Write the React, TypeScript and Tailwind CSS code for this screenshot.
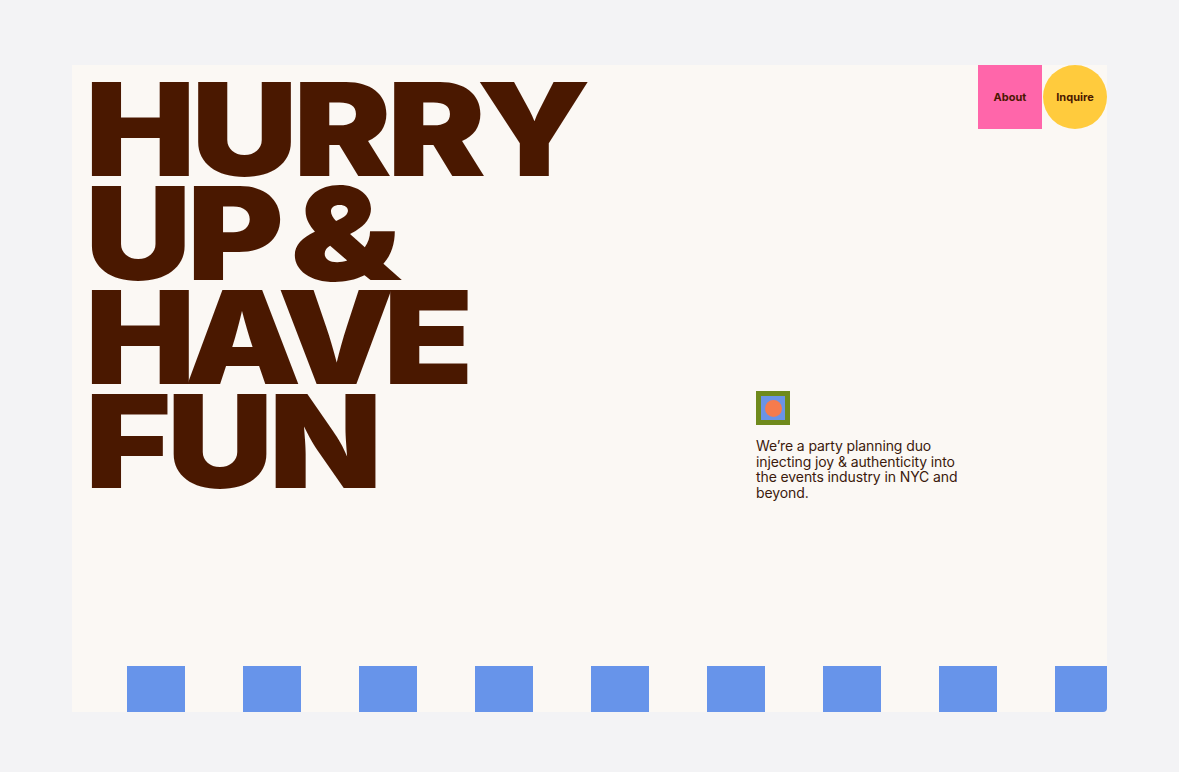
import React from "react";

const squares = Array.from({ length: 9 });

const Logo: React.FC = () => (
  <div className="w-[34px] h-[34px] bg-[#6f8a1c] p-[5px]">
    <div className="w-full h-full bg-[#6a93e6] flex items-center justify-center">
      <div className="w-[17px] h-[17px] rounded-full bg-[#f57b4d]" />
    </div>
  </div>
);

export default function App() {
  return (
    <div className="min-h-screen w-full bg-[#f3f3f5] pt-[65px] pl-[72px]">
      <div className="relative w-[1035px] h-[647px] bg-[#fbf8f4] rounded-br-[4px] overflow-hidden flex flex-col">
        <div className="flex flex-1">
          <div className="w-[684px] shrink-0 pl-[13px] pt-[12px]">
            <h1
              className="origin-left scale-x-[1.145] text-[129px] leading-[104px] font-black tracking-[-4px] text-[#4a1800]"
              style={{ fontFamily: "Inter, 'Liberation Sans', sans-serif" }}
            >
              HURRY
              <br />
              UP<span className="ml-[9px] inline-block origin-left scale-x-[1.08]">&amp;</span>
              <br />
              <span className="tracking-[-10px]">HAVE</span>
              <br />
              FUN
            </h1>
          </div>

          <div className="mt-[326px] w-[212px] flex flex-col">
            <Logo />
            <p
              className="mt-[13px] text-[14px] leading-[15.5px] text-[#3b1a0c] tracking-[-0.1px]"
              style={{ fontFamily: "Inter, 'Liberation Sans', sans-serif" }}
            >
              We’re a party planning duo injecting joy &amp; authenticity into the events industry in NYC and beyond.
            </p>
          </div>

          <nav
            className="ml-auto flex items-start"
            style={{ fontFamily: "Inter, 'Liberation Sans', sans-serif" }}
          >
            <a className="w-[64px] h-[64px] bg-[#ff66aa] flex items-center justify-center text-[11px] font-bold text-[#4a1800]">
              About
            </a>
            <a className="w-[64px] h-[64px] ml-px rounded-full bg-[#ffcb3d] flex items-center justify-center text-[11px] font-bold text-[#4a1800]">
              Inquire
            </a>
          </nav>
        </div>

        <div className="flex gap-[58px] pl-[55px] h-[46px] shrink-0">
          {squares.map((_, i) => (
            <div key={i} className="w-[58px] h-[58px] shrink-0 bg-[#6794ea]" />
          ))}
        </div>
      </div>
    </div>
  );
}
